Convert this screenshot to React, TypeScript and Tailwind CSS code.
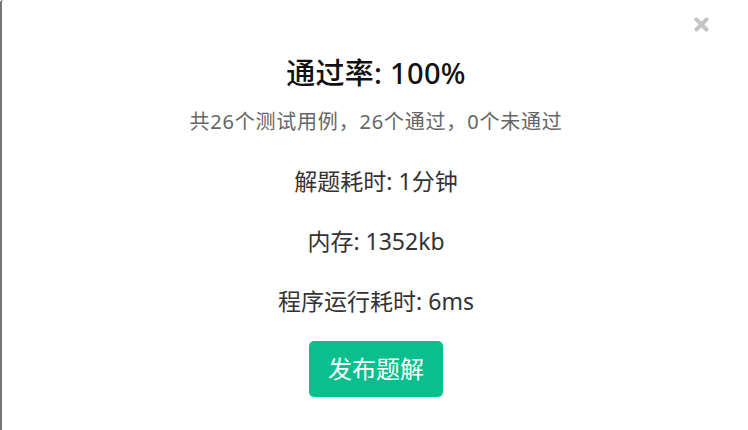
import React from "react";

export default function App() {
  return (
    <div
      className="relative w-[748px] h-[430px] bg-white overflow-hidden border-l-2 border-[#777] rounded-tl-[3px]"
      style={{ fontFamily: '"Noto Sans", "Noto Sans CJK SC", sans-serif' }}
    >
      <button className="absolute left-[692px] top-[17px] w-[15px] h-[15px]" aria-label="close">
        <svg viewBox="0 0 15 15" width="15" height="15">
          <path d="M2.5 2.5 L12.5 12.5 M12.5 2.5 L2.5 12.5" stroke="#c4c4c4" strokeWidth="4" strokeLinecap="round" />
        </svg>
      </button>
      <div className="flex flex-col items-center pt-[53px] pl-[2px]">
        <div className="text-[29px] leading-[40px] font-medium tracking-[0.3px] text-[#111]">通过率: 100%</div>
        <div className="mt-[16px] text-[20px] leading-[26px] tracking-[0.8px] text-[#666]">共26个测试用例，26个通过，0个未通过</div>
        <div className="mt-[31px] text-[23px] leading-[30px] text-[#333]">解题耗时: 1分钟</div>
        <div className="mt-[30px] text-[23px] leading-[30px] text-[#333]">内存: 1352kb</div>
        <div className="mt-[30px] text-[23px] leading-[30px] text-[#333]">程序运行耗时: 6ms</div>
        <button className="mt-[25px] w-[134px] h-[56px] rounded-[5px] bg-[#0abf8d] text-white text-[24px]">发布题解</button>
      </div>
    </div>
  );
}
